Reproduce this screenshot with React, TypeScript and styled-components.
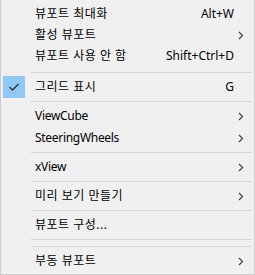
import React from "react"
import styled, { createGlobalStyle } from "styled-components"

const GlobalStyle = createGlobalStyle`
    html, body {
        margin: 0;
        padding: 0;
        background: #ffffff;
    }
    body {
        font-family: "Segoe UI", "Noto Sans", "Noto Sans CJK KR", sans-serif;
        font-size: 12px;
        color: #000000;
    }
`

const MenuContainer = styled.div({
    width: "255px",
    height: "275px",
    boxSizing: "border-box",
    backgroundColor: "#f0f0f0",
    borderLeft: "1px solid #cccccc",
    borderRight: "1px solid #cccccc",
    borderBottom: "1px solid #cccccc",
    padding: "3px 0 2px 0",
    display: "flex",
    flexDirection: "column"
})

const MenuRow = styled.div<{ compact?: boolean }>(({ compact }) => ({
    display: "grid",
    gridTemplateColumns: "30px 1fr auto 20px",
    alignItems: "center",
    height: compact ? "21px" : "22px",
    lineHeight: "16px",
    whiteSpace: "nowrap"
}))

const CheckCell = styled.div<{ checked?: boolean }>(({ checked }) => ({
    width: "22px",
    height: "22px",
    marginLeft: "2px",
    display: "flex",
    alignItems: "center",
    justifyContent: "center",
    backgroundColor: checked ? "#90c8f6" : "transparent"
}))

const Label = styled.span<{ hangul?: boolean }>(({ hangul }) => ({
    paddingLeft: "4px",
    letterSpacing: hangul ? "0.5px" : "-0.3px"
}))

const Shortcut = styled.span({
    textAlign: "right",
    paddingLeft: "20px"
})

const ArrowCell = styled.div({
    display: "flex",
    alignItems: "center",
    paddingLeft: "4px"
})

const Separator = styled.div<{ tall?: boolean }>(({ tall }) => ({
    height: tall ? "10px" : "7px",
    display: "flex",
    alignItems: "flex-start",
    paddingLeft: "30px",
    paddingRight: "2px",
    "&::after": {
        content: '""',
        display: "block",
        marginTop: tall ? "6px" : "3px",
        height: "1px",
        width: "100%",
        backgroundColor: "#d7d7d7"
    }
}))

const CheckMark = () => (
    <svg width="12" height="10" viewBox="0 0 12 10">
        <path d="M1.5 5 L4.5 8 L10.5 2" fill="none" stroke="#333333" strokeWidth="1.4" />
    </svg>
)

const Chevron = () => (
    <svg width="6" height="9" viewBox="0 0 6 9">
        <path d="M1 1 L4.5 4.5 L1 8" fill="none" stroke="#404040" strokeWidth="1.2" />
    </svg>
)

interface MenuItemProps {
    label: string
    shortcut?: string
    submenu?: boolean
    checked?: boolean
    compact?: boolean
}

const isHangul = (text: string) => /[\uac00-\ud7a3]/.test(text)

const MenuItem: React.FC<MenuItemProps> = ({ label, shortcut, submenu, checked, compact }) => (
    <MenuRow compact={compact}>
        <CheckCell checked={checked}>{checked && <CheckMark />}</CheckCell>
        <Label hangul={isHangul(label)}>{label}</Label>
        <Shortcut>{shortcut}</Shortcut>
        <ArrowCell>{submenu && <Chevron />}</ArrowCell>
    </MenuRow>
)

export default function App() {
    return (
        <>
            <GlobalStyle />
            <MenuContainer>
                <MenuItem compact label="뷰포트 최대화" shortcut="Alt+W" />
                <MenuItem compact label="활성 뷰포트" submenu />
                <MenuItem compact label="뷰포트 사용 안 함" shortcut="Shift+Ctrl+D" />
                <Separator tall />
                <MenuItem label="그리드 표시" shortcut="G" checked />
                <Separator />
                <MenuItem label="ViewCube" submenu />
                <MenuItem label="SteeringWheels" submenu />
                <Separator />
                <MenuItem label="xView" submenu />
                <Separator />
                <MenuItem label="미리 보기 만들기" submenu />
                <Separator />
                <MenuItem label="뷰포트 구성..." />
                <Separator />
                <Separator />
                <MenuItem label="부동 뷰포트" submenu />
            </MenuContainer>
        </>
    )
}
